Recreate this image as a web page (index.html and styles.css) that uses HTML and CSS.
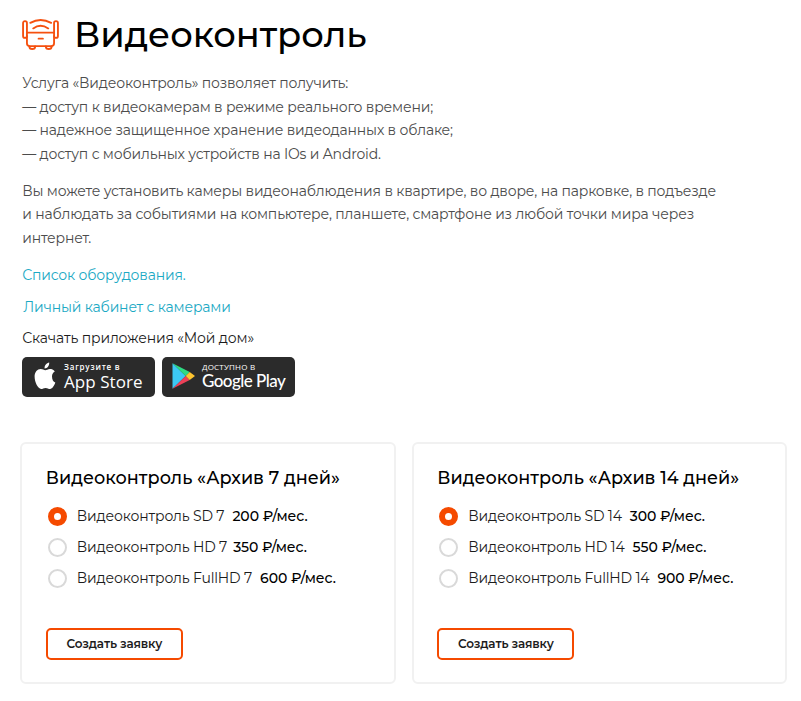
FILE: index.html
```html
<!DOCTYPE html>
<html lang="ru">
<head>
<meta charset="utf-8">
<title>Видеоконтроль</title>
<link rel="stylesheet" href="styles.css">
</head>
<body>
<main class="page">
  <header class="head">
    <svg class="router" viewBox="0 0 38 32" fill="none" stroke="#f5500f" stroke-width="1.9" stroke-linecap="round" stroke-linejoin="round">
      <path d="M5 14V4.200a2 2 0 0 0-4 0v13.300a2 2 0 0 0 4 0M33 14V4.200a2 2 0 0 1 4 0v13.300a2 2 0 0 1-4 0"/>
      <path d="M5 14h28v11a3 3 0 0 1-3 3H8a3 3 0 0 1-3-3zM17 20.300h4.500"/>
      <path d="M7.500 28.300a3 2.700 0 0 0 6 0M24.500 28.300a3 2.700 0 0 0 6 0"/>
      <path d="M8.500 4Q19-2 30 4M11.500 9.700Q19 4.300 27 9.700"/>
    </svg>
    <h1>Видеоконтроль</h1>
  </header>

  <p class="text">Услуга «Видеоконтроль» позволяет получить:<br>— доступ к видеокамерам в режиме реального времени;<br>— надежное защищенное хранение видеоданных в облаке;<br>— доступ с мобильных устройств на IOs и Android.</p>
  <p class="text">Вы можете установить камеры видеонаблюдения в квартире, во дворе, на парковке, в подъезде<br>и наблюдать за событиями на компьютере, планшете, смартфоне из любой точки мира через<br>интернет.</p>

  <nav class="links">
    <a class="link">Список оборудования.</a>
    <a class="link cabinet">Личный кабинет с камерами</a>
    <span>Скачать приложения «Мой дом»</span>
  </nav>

  <div class="stores">
    <a class="store">
      <svg class="apple" viewBox="0 0 22 28" fill="#fff">
        <path d="M15.200 0.500C15.500 3.800 13.200 6.500 10.600 6.400 10.300 3.400 12.700 0.900 15.200 0.500zM18 14.300c0-2.300 1.200-3.900 2.800-4.900-1.300-1.900-3.200-2.500-4.800-2.500-2.100 0-3.500 1.300-4.700 1.300S8.600 7 6.700 7C3.400 7 .6 9.900.6 14.600.6 20.500 4.100 27 7.100 27c1.600 0 2.500-1.100 4.500-1.100s2.700 1.100 4.500 1.100c2.200 0 4.300-3.400 5.200-6.400-2-.8-3.300-2.900-3.300-6.300z"/>
      </svg>
      <span class="store-text"><small class="s-load">Загрузите в</small><span class="s-app">App Store</span></span>
    </a>
    <a class="store store-google">
      <svg class="play" viewBox="0 0 24 28">
        <path fill="#3cc8f4" d="M1 1.200v25.600L14.200 14z"/>
        <path fill="#2edb83" d="M1 1.200 18.200 10l-4 4z"/>
        <path fill="#ec4158" d="M1 26.800 18.200 18l-4-4z"/>
        <path fill="#fdc42f" d="M18.200 10 23.500 14l-5.300 4-4-4z"/>
      </svg>
      <span class="store-text"><small class="s-get">ДОСТУПНО В</small><span class="s-play">Google Play</span></span>
    </a>
  </div>

  <div class="cards">
    <section class="card">
      <h2>Видеоконтроль «Архив 7 дней»</h2>
      <div class="options">
        <label class="option"><i class="radio on"></i><span>Видеоконтроль SD 7</span><b>200 ₽/мес.</b></label>
        <label class="option near"><i class="radio"></i><span>Видеоконтроль HD 7</span><b>350 ₽/мес.</b></label>
        <label class="option"><i class="radio"></i><span>Видеоконтроль FullHD 7</span><b>600 ₽/мес.</b></label>
      </div>
      <button class="order">Создать заявку</button>
    </section>
    <section class="card">
      <h2>Видеоконтроль «Архив 14 дней»</h2>
      <div class="options">
        <label class="option"><i class="radio on"></i><span>Видеоконтроль SD 14</span><b>300 ₽/мес.</b></label>
        <label class="option"><i class="radio"></i><span>Видеоконтроль HD 14</span><b>550 ₽/мес.</b></label>
        <label class="option"><i class="radio"></i><span>Видеоконтроль FullHD 14</span><b>900 ₽/мес.</b></label>
      </div>
      <button class="order">Создать заявку</button>
    </section>
  </div>
</main>
</body>
</html>
```
FILE: styles.css
```css
* { box-sizing: border-box; }

body {
  margin: 0;
  background: #fff;
  color: #1c1c1c;
  font: 400 14px/23.52px Montserrat, "Liberation Sans", sans-serif;
  letter-spacing: -.168px;
}

.page { padding: 15px 13px 0 20.3px; white-space: nowrap; }

.head { display: flex; gap: 15px; height: 57.200px; padding-left: 1.7px; }
.router { width: 37px; height: 31px; margin-top: 4px; }
h1 { margin: 0; color: #000; font-size: 35.28px; line-height: 40px; font-weight: 500; letter-spacing: -.05px; }

.text { margin: 0 0 13.72px 1.9px; color: #4c4c4c; }

.links { display: flex; flex-direction: column; gap: 7.84px; margin-left: 1.9px; }
.link { color: #1ba9c4; }
.cabinet { margin-left: 1px; }

.stores { display: flex; gap: 7px; margin: 6.600px 0 0 1.7px; }
.store {
  display: flex;
  width: 133px;
  height: 40px;
  padding: 5px 0 0 12px;
  border-radius: 5px;
  background: #2b2b2b;
  color: #fff;
}
.store-google { padding-left: 9px; }
.apple { width: 22px; height: 28px; margin-right: 8px; }
.play { width: 25px; height: 28px; margin-right: 6px; }
.store-text { display: flex; flex-direction: column; }
.s-load { font: 600 8px/10px "Open Sans", sans-serif; letter-spacing: .8px; }
.s-app { font: 400 17px/20px "Open Sans", sans-serif; letter-spacing: .05px; }
.s-get { font: 400 8px/9px "Open Sans", sans-serif; letter-spacing: .2px; }
.s-play { font: 500 17px/20px Lato, sans-serif; letter-spacing: -.55px; }

.cards { display: grid; grid-template-columns: 375.500px 375.500px; gap: 16px; margin-top: 44.700px; }
.card {
  height: 242px;
  padding: 22px 23.500px 0;
  border: 2px solid #f1f1f1;
  border-radius: 6px;
}
h2 { margin: 0; color: #000; font-size: 17.64px; line-height: 24px; font-weight: 500; letter-spacing: 0; }

.options { display: grid; gap: 7.84px; margin: 14.800px 0 37.200px 2px; }
.option { display: flex; align-items: center; gap: 8px; }
.near { gap: 6px; }
.option b { font-weight: 500; color: #000; letter-spacing: -.05px; }
.radio { width: 19px; height: 19px; margin-right: 2px; border: 2px solid #d9d9d9; border-radius: 50%; }
.near .radio { margin-right: 4px; }
.radio.on { border: 6.500px solid #f54a00; }

.order {
  display: block;
  width: 137px;
  height: 32px;
  padding: 0;
  border: 2px solid #f54a00;
  border-radius: 5px;
  background: #fff;
  color: #1c1c1c;
  font: 600 12px/28px Montserrat, sans-serif;
  letter-spacing: -.14px;
}
```
